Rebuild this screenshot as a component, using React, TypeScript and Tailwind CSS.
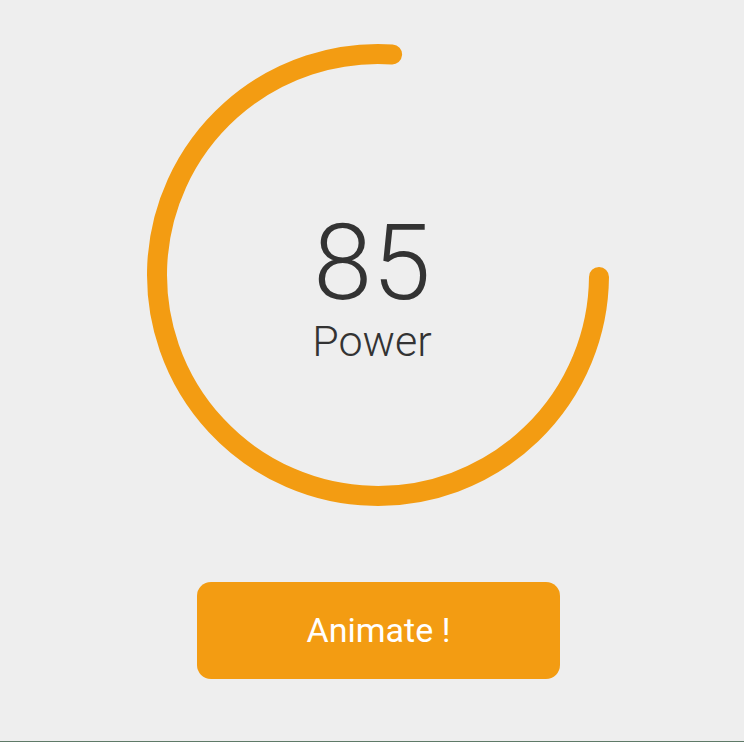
export default function App() {
  return (
    <div
      className="flex h-[742px] w-full flex-col items-center border-b border-[#5f7a68] bg-[#eeeeee] pt-[35px]"
      style={{ fontFamily: 'Roboto, "Liberation Sans", sans-serif' }}
    >
      <div className="relative h-[480px] w-[744px]">
        <svg width="744" height="480" viewBox="0 0 744 480" fill="none">
          <path
            d="M 392.1 19.4 A 221 221 0 1 0 599 242"
            stroke="#f39c12"
            strokeWidth="20"
            strokeLinecap="round"
          />
        </svg>
        <div className="absolute inset-x-0 top-[173px] flex flex-col items-center text-[#333333]">
          <div className="text-[106px] font-light leading-[110px]">85</div>
          <div className="text-[43px] font-light leading-[46px]">Power</div>
        </div>
      </div>
      <button className="ml-[13px] mt-[67px] flex h-[97px] w-[363px] items-center justify-center rounded-[14px] bg-[#f39c12] text-[34px] text-white">
        Animate !
      </button>
    </div>
  );
}
